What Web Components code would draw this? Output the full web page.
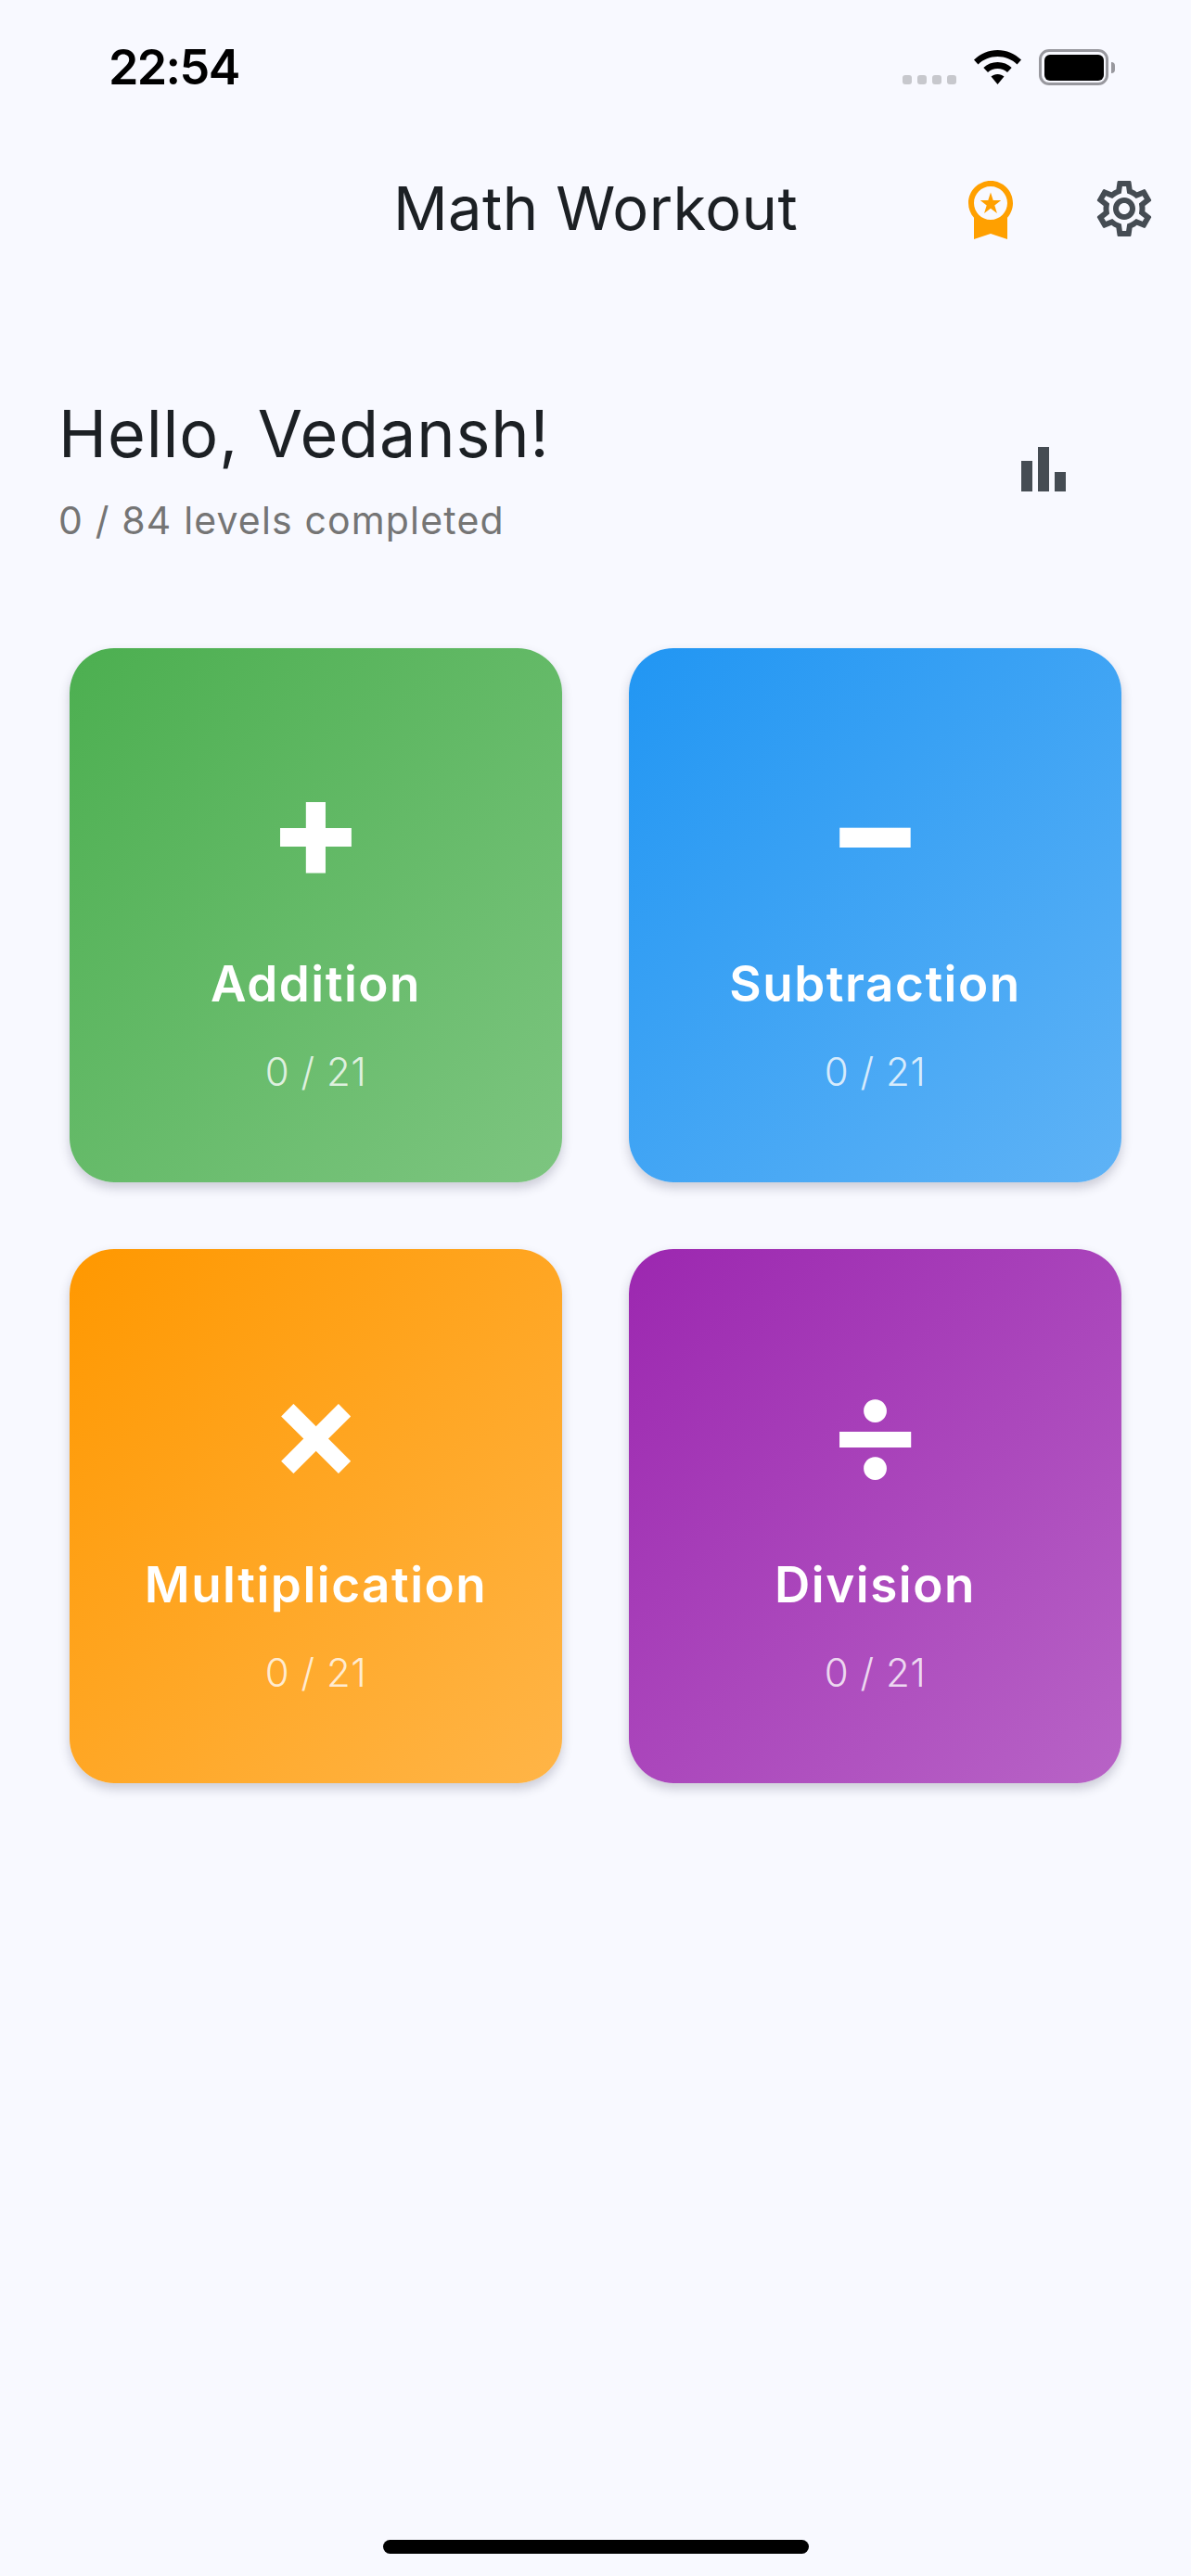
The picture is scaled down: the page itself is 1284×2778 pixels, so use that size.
<!DOCTYPE html>
<html lang="en">
<head>
<meta charset="utf-8">
<title>Math Workout</title>
<style>
  html, body { margin: 0; padding: 0; background: #f8f9ff; }
  body { font-family: 'Inter', 'Noto Sans', sans-serif; }
</style>
</head>
<body>
<math-screen>
  <status-bar time="22:54"></status-bar>
  <app-header title="Math Workout"></app-header>
  <greeting-row name="Vedansh" done="0" total="84"></greeting-row>
  <op-grid>
    <op-card symbol="+" label="Addition" from="#4caf50" to="#81c784"></op-card>
    <op-card symbol="−" label="Subtraction" from="#2196f3" to="#64b5f6"></op-card>
    <op-card symbol="×" sym-font="700 146px" label="Multiplication" from="#ff9800" to="#ffb74d"></op-card>
    <op-card symbol="÷" sym-font="600 160px" label="Division" from="#9c27b0" to="#ba68c8"></op-card>
  </op-grid>
  <home-indicator></home-indicator>
</math-screen>

<script>
class MathScreen extends HTMLElement {
  constructor() {
    super();
    this.attachShadow({ mode: 'open' });
    this.shadowRoot.innerHTML = `
      <style>
        :host { display: flex; flex-direction: column; width: 1284px; height: 2778px; background: #f8f9ff; overflow: hidden; }
      </style>
      <slot></slot>
    `;
  }
}

class StatusBar extends HTMLElement {
  connectedCallback() {
    this.attachShadow({ mode: 'open' });
    this.shadowRoot.innerHTML = `
      <style>
        :host { display: flex; justify-content: space-between; height: 189px; padding: 53px 82px 0 117px; box-sizing: border-box; }
        .time { font: 600 52px/39px 'Inter', sans-serif; letter-spacing: -1.6px; color: #000; }
        .right { display: flex; align-items: flex-start; }
        .dots { display: flex; gap: 6px; margin-top: 28px; }
        .dots i { width: 10px; height: 10px; border-radius: 3px; background: #c7c8cd; }
        .wifi { display: block; margin: 1px 19px 0 19px; }
        .batt { width: 75px; height: 39px; box-sizing: border-box; border: 3.5px solid #98989e; border-radius: 11px; padding: 2.5px; }
        .batt i { display: block; height: 100%; background: #000; border-radius: 6px; }
        .nub { width: 4px; height: 12px; margin: 14px 0 0 3px; background: #98989e; border-radius: 0 4px 4px 0; }
      </style>
      <div class="time">${this.getAttribute('time')}</div>
      <div class="right">
        <div class="dots"><i></i><i></i><i></i><i></i></div>
        <svg class="wifi" width="51" height="37" viewBox="0 0 51 37" fill="#000">
          <path d="M25.5 0C35 0 44 4 51 10.5L46.5 15.5C41 10 33.5 7 25.5 7C17.5 7 10 10 4.5 15.5L0 10.5C7 4 16 0 25.5 0Z"/>
          <path d="M25.5 13C31.5 13 36.7 15.2 40.7 19L36 24C33.2 21.5 29.5 20 25.5 20C21.5 20 17.8 21.5 15 24L10.3 19C14.3 15.2 19.5 13 25.5 13Z"/>
          <path d="M25.5 26C28.3 26 30.5 27 32.5 28.6L25.5 37L18.5 28.6C20.5 27 22.7 26 25.5 26Z"/>
        </svg>
        <div class="batt"><i></i></div>
        <div class="nub"></div>
      </div>
    `;
  }
}

class AppHeader extends HTMLElement {
  connectedCallback() {
    this.attachShadow({ mode: 'open' });
    this.shadowRoot.innerHTML = `
      <style>
        :host { display: grid; grid-template-columns: 1fr auto 1fr; align-items: center; height: 72px; }
        h1 { margin: 0; font: 400 65px/72px 'Inter', sans-serif; letter-spacing: 0.4px; color: #1c2024; }
        .actions { display: flex; justify-content: flex-end; gap: 72px; padding-right: 36px; }
        svg { display: block; width: 72px; height: 72px; }
      </style>
      <div></div>
      <h1>${this.getAttribute('title')}</h1>
      <div class="actions">
        <svg viewBox="0 0 24 24" fill="#ffa000"><path d="M9.68 13.69 12 11.93l2.31 1.76-.88-2.85L15.75 9h-2.84L12 6.19 11.09 9H8.25l2.31 1.84-.88 2.85zM20 10c0-4.42-3.58-8-8-8s-8 3.58-8 8c0 2.03.76 3.87 2 5.28V23l6-2 6 2v-7.72c1.24-1.41 2-3.25 2-5.28zm-8-6c3.31 0 6 2.69 6 6s-2.69 6-6 6-6-2.69-6-6 2.69-6 6-6z"/></svg>
        <svg viewBox="0 0 24 24" fill="#454c53"><path d="M19.43 12.98c.04-.32.07-.64.07-.98 0-.34-.03-.66-.07-.98l2.11-1.65c.19-.15.24-.42.12-.64l-2-3.46c-.09-.16-.26-.25-.44-.25-.06 0-.12.01-.17.03l-2.49 1c-.52-.4-1.08-.73-1.69-.98l-.38-2.65C14.46 2.18 14.25 2 14 2h-4c-.25 0-.46.18-.49.42l-.38 2.65c-.61.25-1.17.59-1.69.98l-2.49-1c-.06-.02-.12-.03-.18-.03-.17 0-.34.09-.43.25l-2 3.46c-.13.22-.07.49.12.64l2.11 1.65c-.04.32-.07.65-.07.98 0 .33.03.66.07.98l-2.11 1.65c-.19.15-.24.42-.12.64l2 3.46c.09.16.26.25.44.25.06 0 .12-.01.17-.03l2.49-1c.52.4 1.08.73 1.69.98l.38 2.65c.03.24.24.42.49.42h4c.25 0 .46-.18.49-.42l.38-2.65c.61-.25 1.17-.59 1.69-.98l2.49 1c.06.02.12.03.18.03.17 0 .34-.09.43-.25l2-3.46c.12-.22.07-.49-.12-.64l-2.11-1.65zm-1.98-1.71c.04.31.05.52.05.73 0 .21-.02.43-.05.73l-.14 1.13.89.7 1.08.84-.7 1.21-1.27-.51-1.04-.42-.9.68c-.43.32-.84.56-1.25.73l-1.06.43-.16 1.13-.2 1.35h-1.4l-.19-1.35-.16-1.13-1.06-.43c-.43-.18-.83-.41-1.23-.71l-.91-.7-1.06.43-1.27.51-.7-1.21 1.08-.84.89-.7-.14-1.13c-.03-.31-.05-.54-.05-.74s.02-.43.05-.73l.14-1.13-.89-.7-1.08-.84.7-1.21 1.27.51 1.04.42.9-.68c.43-.32.84-.56 1.25-.73l1.06-.43.16-1.13.2-1.35h1.39l.19 1.35.16 1.13 1.06.43c.43.18.83.41 1.23.71l.91.7 1.06-.43 1.27-.51.7 1.21-1.07.85-.89.7.14 1.13zM12 8c-2.21 0-4 1.79-4 4s1.79 4 4 4 4-1.79 4-4-1.79-4-4-4zm0 6c-1.1 0-2-.9-2-2s.9-2 2-2 2 .9 2 2-.9 2-2 2z"/></svg>
      </div>
    `;
  }
}

class GreetingRow extends HTMLElement {
  connectedCallback() {
    this.attachShadow({ mode: 'open' });
    this.shadowRoot.innerHTML = `
      <style>
        :host { display: flex; justify-content: space-between; align-items: center; margin-top: 165px; padding: 0 123px 0 63px; }
        h2 { margin: 0; font: 400 70px/84px 'Inter', sans-serif; letter-spacing: 0.9px; color: #1c2024; }
        p { margin: 26px 0 0; font: 400 41px/50px 'Inter', sans-serif; letter-spacing: 1.15px; color: #757575; }
        svg { display: block; width: 72px; height: 72px; }
      </style>
      <div>
        <h2>Hello, ${this.getAttribute('name')}!</h2>
        <p>${this.getAttribute('done')} / ${this.getAttribute('total')} levels completed</p>
      </div>
      <svg viewBox="0 0 24 24" fill="#454c53"><path d="M4 9h4v11H4zm12 4h4v7h-4zm-6-9h4v16h-4z"/></svg>
    `;
  }
}

class OpGrid extends HTMLElement {
  constructor() {
    super();
    this.attachShadow({ mode: 'open' });
    this.shadowRoot.innerHTML = `
      <style>
        :host { display: grid; grid-template-columns: 531px 531px; grid-auto-rows: 576px; gap: 72px; padding: 0 75px; margin-top: 113px; }
      </style>
      <slot></slot>
    `;
  }
}

class OpCard extends HTMLElement {
  connectedCallback() {
    this.attachShadow({ mode: 'open' });
    const from = this.getAttribute('from');
    const to = this.getAttribute('to');
    // los glifos × y ÷ de Inter no tienen la misma proporcion que + y −
    const symFont = this.getAttribute('sym-font') || '800 150px';
    this.shadowRoot.innerHTML = `
      <style>
        :host { display: flex; flex-direction: column; align-items: center; box-sizing: border-box; padding-top: 122px; border-radius: 48px; color: #fff; background: linear-gradient(135deg, ${from}, ${to} 108%); box-shadow: 0 6px 12px rgba(40,40,70,.22); }
        .sym { height: 144px; font: ${symFont}/144px 'Inter', sans-serif; }
        .label { margin-top: 65px; font: 600 53px/62px 'Inter', sans-serif; letter-spacing: 1.5px; }
        .count { margin-top: 39px; font: 300 42px/50px 'Inter', sans-serif; letter-spacing: 0.5px; color: rgba(255,255,255,.8); }
      </style>
      <div class="sym">${this.getAttribute('symbol')}</div>
      <div class="label">${this.getAttribute('label')}</div>
      <div class="count">0 / 21</div>
    `;
  }
}

class HomeIndicator extends HTMLElement {
  constructor() {
    super();
    this.attachShadow({ mode: 'open' });
    this.shadowRoot.innerHTML = `
      <style>
        :host { display: block; width: 459px; height: 15px; margin: auto auto 24px; border-radius: 8px; background: #000; }
      </style>
    `;
  }
}

customElements.define('math-screen', MathScreen);
customElements.define('status-bar', StatusBar);
customElements.define('app-header', AppHeader);
customElements.define('greeting-row', GreetingRow);
customElements.define('op-grid', OpGrid);
customElements.define('op-card', OpCard);
customElements.define('home-indicator', HomeIndicator);
</script>
</body>
</html>
